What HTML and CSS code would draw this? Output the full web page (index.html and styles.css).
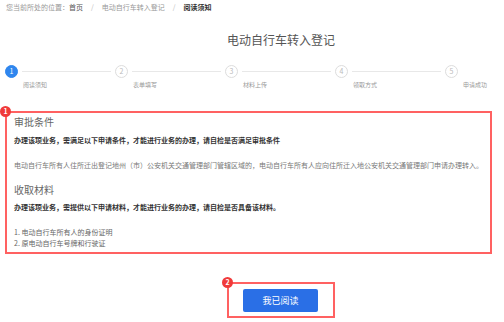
FILE: index.html
```html
<!DOCTYPE html>
<html lang="zh-CN">
<head>
    <meta charset="UTF-8">
    <title>阅读须知</title>
    <link rel="stylesheet" href="styles.css">
</head>
<body>
<div class="crumb">
    您当前所处的位置：<a class="crumb-link">首页</a><span class="sep">/</span>电动自行车转入登记<span class="sep">/</span><b>阅读须知</b>
</div>

<h1 class="title">电动自行车转入登记</h1>

<div class="steps">
    <div class="step active">
        <div class="step-head"><span class="num">1</span><i class="line"></i></div>
        <div class="step-name">阅读须知</div>
    </div>
    <div class="step">
        <div class="step-head"><span class="num">2</span><i class="line"></i></div>
        <div class="step-name">表单填写</div>
    </div>
    <div class="step">
        <div class="step-head"><span class="num">3</span><i class="line"></i></div>
        <div class="step-name">材料上传</div>
    </div>
    <div class="step">
        <div class="step-head"><span class="num">4</span><i class="line"></i></div>
        <div class="step-name">领取方式</div>
    </div>
    <div class="step last">
        <div class="step-head"><span class="num">5</span></div>
        <div class="step-name">申请成功</div>
    </div>
</div>

<div class="notice mark">
    <span class="badge">1</span>
    <h2>审批条件</h2>
    <p class="strong">办理该项业务，需满足以下申请条件，才能进行业务的办理，请自检是否满足审批条件</p>
    <p class="text">电动自行车所有人住所迁出登记地州（市）公安机关交通管理部门管辖区域的，电动自行车所有人应向住所迁入地公安机关交通管理部门申请办理转入。</p>
    <h2 class="sub">收取材料</h2>
    <p class="strong">办理该项业务，需提供以下申请材料，才能进行业务的办理，请自检是否具备该材料。</p>
    <ul class="list">
        <li>1. 电动自行车所有人的身份证明</li>
        <li>2. 原电动自行车号牌和行驶证</li>
    </ul>
</div>

<div class="footer">
    <div class="btn-wrap mark">
        <span class="badge">2</span>
        <button class="btn">我已阅读</button>
    </div>
</div>
</body>
</html>
```

FILE: styles.css
```css
body {
    margin: 0;
    font-family: "Noto Sans CJK SC", "Noto Sans", sans-serif;
    color: #666;
    background: #fff;
}

.crumb {
    padding: 2px 6px 0;
    font-size: 7px;
    line-height: 10px;
    color: #999;
}

.crumb-link {
    color: #555;
}

.crumb .sep {
    margin: 0 8px;
    color: #bbb;
}

.crumb b {
    color: #333;
}

.title {
    margin: 20px 0 0;
    padding-left: 58px;
    text-align: center;
    font-size: 12px;
    line-height: 16px;
    font-weight: normal;
    color: #555;
}

.steps {
    display: flex;
    margin: 17px 0 0 5px;
}

.step {
    width: 110px;
}

.step.last {
    width: 50px;
}

.step-head {
    display: flex;
    align-items: center;
}

.num {
    box-sizing: border-box;
    width: 13px;
    height: 13px;
    border: 1px solid #ddd;
    border-radius: 50%;
    font-size: 7px;
    line-height: 11px;
    text-align: center;
    color: #bbb;
}

.step.active .num {
    background: #2f86ee;
    border-color: #2f86ee;
    color: #fff;
}

.line {
    flex: 1;
    height: 1px;
    margin: 0 4px;
    background: #e8e8e8;
}

.step-name {
    margin-top: 3px;
    padding-left: 18px;
    font-size: 6px;
    line-height: 8px;
    color: #999;
    white-space: nowrap;
}

.mark {
    position: relative;
    border: 2px solid #ff6161;
}

.badge {
    position: absolute;
    left: -7px;
    top: -7px;
    width: 11px;
    height: 11px;
    border-radius: 50%;
    background: #f03a3a;
    color: #fff;
    font-size: 7px;
    font-weight: bold;
    line-height: 11px;
    text-align: center;
}

.notice {
    margin: 22px 12px 0 5px;
    padding: 2px 7px 3px;
}

.notice h2 {
    margin: 0;
    font-size: 10px;
    line-height: 14px;
    font-weight: normal;
    color: #666;
}

.notice h2.sub {
    margin-top: 13px;
}

.notice p {
    margin: 0;
    font-size: 7px;
    line-height: 10px;
    white-space: nowrap;
}

.notice .strong {
    margin-top: 6px;
    font-weight: bold;
    color: #333;
}

.notice .sub + .strong {
    margin-top: 5px;
}

.notice .text {
    margin-top: 15px;
    color: #777;
}

.list {
    margin: 15px 0 0;
    padding: 0;
    list-style: none;
    font-size: 7px;
    line-height: 11px;
    color: #666;
}

.footer {
    margin-top: 28px;
    padding-left: 58px;
    text-align: center;
}

.btn-wrap {
    display: inline-block;
    padding: 5px 15px 4px 14px;
}

.btn {
    display: block;
    width: 75px;
    height: 23px;
    border: 0;
    border-radius: 2px;
    background: #2a6fe6;
    color: #fff;
    font-family: inherit;
    font-size: 9px;
    padding: 0;
}
```
